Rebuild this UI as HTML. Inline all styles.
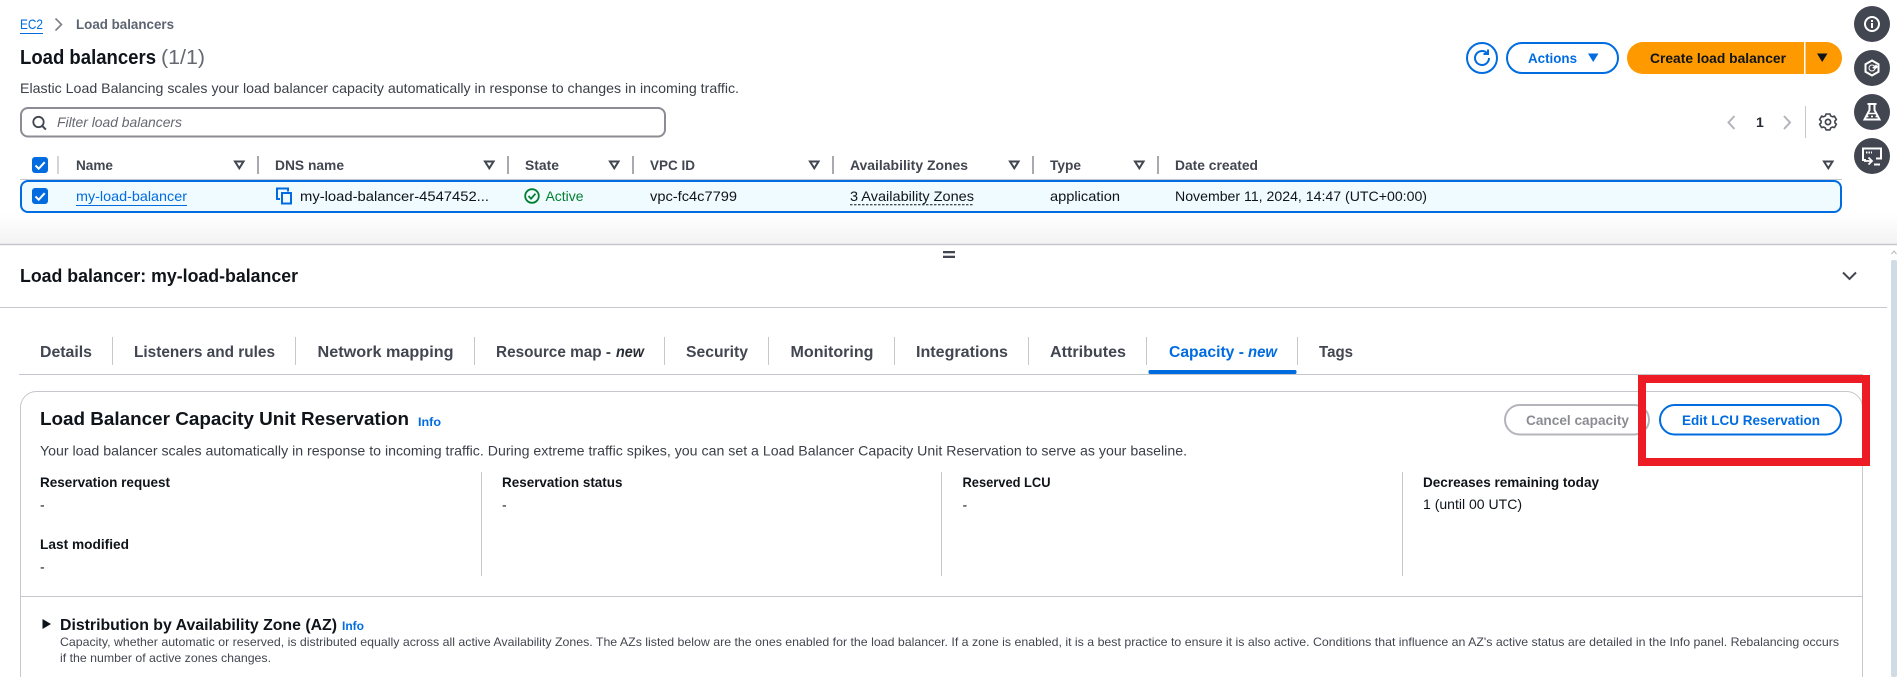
<!DOCTYPE html>
<html lang="en">
<head>
<meta charset="utf-8">
<title>Load balancers</title>
<style>
html,body{margin:0;padding:0;width:1897px;height:677px;overflow:hidden;background:#fff}
svg{display:block;position:absolute;left:0;top:0}
text{font-family:"Liberation Sans",Arial,sans-serif;font-size:14px;fill:#0f141a;white-space:pre}
.b{font-weight:700}
.h{font-weight:700;fill:#424650}
.l{fill:#006ce0}
.lb{fill:#006ce0;font-weight:700}
.d{fill:#3a3f48}
.t{font-weight:700;font-size:16px;fill:#424650}
.s{font-size:12px;fill:#424650}
.sep{stroke:#8c8c94;stroke-width:1.5}
.tsep{stroke:#c6c6cd;stroke-width:1}
.ft{fill:none;stroke:#424650;stroke-width:2;stroke-linejoin:miter}
</style>
</head>
<body>
<svg width="1897" height="677" viewBox="0 0 1897 677" xmlns="http://www.w3.org/2000/svg">
<defs>
<linearGradient id="g" x1="0" y1="0" x2="0" y2="1"><stop offset="0" stop-color="#ffffff"/><stop offset="1" stop-color="#f3f3f3"/></linearGradient>
</defs>

<!-- Breadcrumb -->
<text x="20" y="29" class="l" textLength="23" lengthAdjust="spacingAndGlyphs">EC2</text>
<line x1="20" y1="33.5" x2="43" y2="33.5" stroke="#006ce0" stroke-width="1"/>
<path d="M55.5 18.5L61.5 24.5L55.5 30.5" fill="none" stroke="#7d7f87" stroke-width="1.6"/>
<text x="76" y="29" class="b" style="fill:#5b6470" textLength="98" lengthAdjust="spacingAndGlyphs">Load balancers</text>

<!-- Heading -->
<text x="20" y="64" class="b" style="font-size:20px" textLength="136" lengthAdjust="spacingAndGlyphs">Load balancers</text>
<text x="161" y="64" style="font-size:20px;fill:#656871" textLength="44" lengthAdjust="spacingAndGlyphs">(1/1)</text>
<text x="20" y="93" class="d" textLength="719" lengthAdjust="spacingAndGlyphs">Elastic Load Balancing scales your load balancer capacity automatically in response to changes in incoming traffic.</text>

<!-- Top buttons -->
<circle cx="1482" cy="58" r="15" fill="#fff" stroke="#006ce0" stroke-width="2"/>
<path d="M1489 58a7 7 0 1 1-2.2-5.1" fill="none" stroke="#006ce0" stroke-width="2"/>
<path d="M1488 49.500v4.500h-4.500" fill="none" stroke="#006ce0" stroke-width="2"/>
<rect x="1507" y="43" width="111" height="30" rx="15" fill="#fff" stroke="#006ce0" stroke-width="2"/>
<text x="1528" y="63" class="lb" textLength="49" lengthAdjust="spacingAndGlyphs">Actions</text>
<path d="M1588 53.500h10.500L1593.200 62z" fill="#006ce0"/>
<path d="M1643 42H1804V74H1643A16 16 0 0 1 1643 42Z" fill="#ff9900"/>
<path d="M1805.500 42H1826A16 16 0 0 1 1826 74H1805.500Z" fill="#ff9900"/>
<text x="1650" y="63" class="b" textLength="136" lengthAdjust="spacingAndGlyphs">Create load balancer</text>
<path d="M1817 53.500h10.500L1822.200 62z" fill="#0f141a"/>

<!-- Side buttons -->
<circle cx="1872" cy="24" r="18" fill="#424650"/>
<circle cx="1872" cy="24" r="7" fill="none" stroke="#fff" stroke-width="2"/>
<rect x="1871" y="23" width="2" height="5" fill="#fff"/><rect x="1871" y="20" width="2" height="2" fill="#fff"/>
<circle cx="1872" cy="68" r="18" fill="#424650"/>
<path d="M1872 60.500l6.500 3.700v7.600l-6.500 3.700-6.500-3.700v-7.600z" fill="none" stroke="#fff" stroke-width="2"/>
<path d="M1872 68l4-3.500 2 2.500-2.500 2z" fill="#fff"/>
<circle cx="1872" cy="68" r="3" fill="none" stroke="#fff" stroke-width="1"/>
<circle cx="1872" cy="112" r="18" fill="#424650"/>
<path d="M1867.500 104h9M1869.500 104v6l-5 9.500h15l-5-9.500v-6" fill="none" stroke="#fff" stroke-width="2"/>
<path d="M1868.500 113.500h7M1867 116.500h1.500M1871 116.500h2M1875.500 116.500h1.500" stroke="#fff" stroke-width="1.500"/>
<circle cx="1872" cy="156" r="18" fill="#424650"/>
<path d="M1866 160h-3v-11.500h18v10h-5" fill="none" stroke="#fff" stroke-width="2"/>
<path d="M1866 152.500h6" stroke="#fff" stroke-width="2" stroke-dasharray="1.500 1"/>
<path d="M1868.500 157.500l3.500 3.500-3.500 3.500M1864 161h7.500" fill="none" stroke="#fff" stroke-width="1.800"/>
<path d="M1874 164.500h6" stroke="#fff" stroke-width="2"/>

<!-- Search -->
<rect x="21" y="108" width="644" height="28.500" rx="7" fill="#fff" stroke="#8c8c94" stroke-width="2"/>
<circle cx="38.500" cy="122" r="5.200" fill="none" stroke="#424650" stroke-width="1.800"/>
<path d="M42.300 126l3.600 3.600" stroke="#424650" stroke-width="2"/>
<text x="57" y="127" style="font-style:italic;fill:#656871" textLength="125" lengthAdjust="spacingAndGlyphs">Filter load balancers</text>

<!-- Pagination -->
<path d="M1734.500 116l-6 6.500 6 6.500" fill="none" stroke="#b4b4bb" stroke-width="2"/>
<text x="1756" y="127" class="b" style="fill:#272b33">1</text>
<path d="M1784 116l6 6.500-6 6.500" fill="none" stroke="#b4b4bb" stroke-width="2"/>
<line x1="1805.500" y1="106" x2="1805.500" y2="138" stroke="#c6c6cd" stroke-width="1"/>
<circle cx="1828" cy="122" r="2.600" fill="none" stroke="#424650" stroke-width="1.700"/>
<path d="M1826 115h4l.6 1.900 1.900.9 1.900-.7 2 3.400-1.500 1.400v2l1.500 1.300-2 3.400-1.900-.6-1.900 1-.6 1.900h-4l-.6-1.900-1.900-1-1.900.6-2-3.400 1.500-1.300v-2l-1.500-1.400 2-3.400 1.900.7 1.900-.9z" fill="none" stroke="#424650" stroke-width="1.600" stroke-linejoin="round" transform="translate(0 -1)"/>

<!-- Table header -->
<rect x="32" y="157" width="16" height="16" rx="3" fill="#006ce0"/>
<path d="M35.500 165.500l3.200 3.200 6-6.500" fill="none" stroke="#fff" stroke-width="2"/>
<line x1="58" y1="156" x2="58" y2="174" stroke="#c6c6cd" stroke-width="1.500"/>
<text x="76" y="170" class="h" textLength="37" lengthAdjust="spacingAndGlyphs">Name</text>
<path class="ft" d="M235 161.500h8.500l-4.200 6.800z"/>
<line class="sep" x1="258" y1="156" x2="258" y2="174"/>
<text x="275" y="170" class="h" textLength="69" lengthAdjust="spacingAndGlyphs">DNS name</text>
<path class="ft" d="M485 161.500h8.500l-4.200 6.800z"/>
<line class="sep" x1="508" y1="156" x2="508" y2="174"/>
<text x="525" y="170" class="h" textLength="34" lengthAdjust="spacingAndGlyphs">State</text>
<path class="ft" d="M610 161.500h8.500l-4.200 6.800z"/>
<line class="sep" x1="633" y1="156" x2="633" y2="174"/>
<text x="650" y="170" class="h" textLength="45" lengthAdjust="spacingAndGlyphs">VPC ID</text>
<path class="ft" d="M810 161.500h8.500l-4.200 6.800z"/>
<line class="sep" x1="833" y1="156" x2="833" y2="174"/>
<text x="850" y="170" class="h" textLength="118" lengthAdjust="spacingAndGlyphs">Availability Zones</text>
<path class="ft" d="M1010 161.500h8.500l-4.200 6.800z"/>
<line class="sep" x1="1033" y1="156" x2="1033" y2="174"/>
<text x="1050" y="170" class="h" textLength="31" lengthAdjust="spacingAndGlyphs">Type</text>
<path class="ft" d="M1135 161.500h8.500l-4.200 6.800z"/>
<line class="sep" x1="1158" y1="156" x2="1158" y2="174"/>
<text x="1175" y="170" class="h" textLength="83" lengthAdjust="spacingAndGlyphs">Date created</text>
<path class="ft" d="M1824 161.500h8.500l-4.200 6.800z"/>
<line x1="20" y1="179.500" x2="1842" y2="179.500" stroke="#c6c6cd" stroke-width="1"/>

<!-- Fade -->
<rect x="0" y="213" width="1897" height="31" fill="url(#g)"/>

<!-- Selected row -->
<rect x="21" y="181" width="1820" height="31" rx="7" fill="#f0fbff" stroke="#006ce0" stroke-width="2"/>
<rect x="32" y="188" width="16" height="16" rx="3" fill="#006ce0"/>
<path d="M35.500 196.500l3.200 3.200 6-6.500" fill="none" stroke="#fff" stroke-width="2"/>
<text x="76" y="201" class="l" textLength="111" lengthAdjust="spacingAndGlyphs">my-load-balancer</text>
<line x1="76" y1="205.500" x2="187" y2="205.500" stroke="#006ce0" stroke-width="1"/>
<path d="M280 199h-3v-10.500h11v3" fill="none" stroke="#006ce0" stroke-width="2"/>
<rect x="282" y="193" width="9" height="10.500" fill="none" stroke="#006ce0" stroke-width="2"/>
<text x="300" y="201" textLength="189" lengthAdjust="spacingAndGlyphs">my-load-balancer-4547452...</text>
<circle cx="532" cy="196" r="6.800" fill="none" stroke="#00802f" stroke-width="1.800"/>
<path d="M528.500 196l2.500 2.700 4.500-5" fill="none" stroke="#00802f" stroke-width="1.800"/>
<text x="545.500" y="201" style="fill:#00802f" textLength="38" lengthAdjust="spacingAndGlyphs">Active</text>
<text x="650" y="201" textLength="87" lengthAdjust="spacingAndGlyphs">vpc-fc4c7799</text>
<text x="850" y="201" textLength="124" lengthAdjust="spacingAndGlyphs">3 Availability Zones</text>
<line x1="850" y1="204.700" x2="974" y2="204.700" stroke="#0f141a" stroke-width="1" stroke-dasharray="2.500 1.500"/>
<text x="1050" y="201" textLength="70" lengthAdjust="spacingAndGlyphs">application</text>
<text x="1175" y="201" textLength="252" lengthAdjust="spacingAndGlyphs">November 11, 2024, 14:47 (UTC+00:00)</text>

<!-- Split panel -->
<line x1="0" y1="244.500" x2="1897" y2="244.500" stroke="#c6c6cd" stroke-width="1.500"/>
<rect x="943" y="251" width="12" height="2.300" fill="#424650"/>
<rect x="943" y="255.700" width="12" height="2.300" fill="#424650"/>
<text x="20" y="282" class="b" style="font-size:18px" textLength="278" lengthAdjust="spacingAndGlyphs">Load balancer: my-load-balancer</text>
<path d="M1843 272.500l6.500 6.500 6.500-6.500" fill="none" stroke="#424650" stroke-width="2"/>
<line x1="0" y1="307.500" x2="1887" y2="307.500" stroke="#c6c6cd" stroke-width="1"/>

<!-- Scrollbar -->
<path d="M1891.500 254l2.500-3 2.500 3" fill="none" stroke="#b8b8b8" stroke-width="1"/>
<rect x="1891" y="260" width="6" height="417" rx="2" fill="#d0dbe4"/>

<!-- Tabs -->
<text x="40" y="357" class="t" textLength="52" lengthAdjust="spacingAndGlyphs">Details</text>
<line class="tsep" x1="112.500" y1="337" x2="112.500" y2="365"/>
<text x="134" y="357" class="t" textLength="141" lengthAdjust="spacingAndGlyphs">Listeners and rules</text>
<line class="tsep" x1="295.500" y1="337" x2="295.500" y2="365"/>
<text x="317.500" y="357" class="t" textLength="136" lengthAdjust="spacingAndGlyphs">Network mapping</text>
<line class="tsep" x1="474.500" y1="337" x2="474.500" y2="365"/>
<text x="496" y="357" class="t" textLength="115" lengthAdjust="spacingAndGlyphs">Resource map -</text>
<text x="616" y="357" class="t" style="font-style:italic;fill:#272b33" textLength="28" lengthAdjust="spacingAndGlyphs">new</text>
<line class="tsep" x1="664.500" y1="337" x2="664.500" y2="365"/>
<text x="686" y="357" class="t" textLength="62" lengthAdjust="spacingAndGlyphs">Security</text>
<line class="tsep" x1="768.500" y1="337" x2="768.500" y2="365"/>
<text x="790.500" y="357" class="t" textLength="83" lengthAdjust="spacingAndGlyphs">Monitoring</text>
<line class="tsep" x1="894.500" y1="337" x2="894.500" y2="365"/>
<text x="916" y="357" class="t" textLength="92" lengthAdjust="spacingAndGlyphs">Integrations</text>
<line class="tsep" x1="1028.500" y1="337" x2="1028.500" y2="365"/>
<text x="1050" y="357" class="t" textLength="76" lengthAdjust="spacingAndGlyphs">Attributes</text>
<line class="tsep" x1="1146.500" y1="337" x2="1146.500" y2="365"/>
<text x="1169" y="357" class="t" style="fill:#006ce0" textLength="75" lengthAdjust="spacingAndGlyphs">Capacity -</text>
<text x="1248" y="357" class="t" style="font-style:italic;fill:#006ce0" textLength="29" lengthAdjust="spacingAndGlyphs">new</text>
<line class="tsep" x1="1297.500" y1="337" x2="1297.500" y2="365"/>
<text x="1319" y="357" class="t" textLength="34" lengthAdjust="spacingAndGlyphs">Tags</text>
<line x1="19" y1="374.500" x2="1863" y2="374.500" stroke="#c6c6cd" stroke-width="1"/>
<rect x="1148.500" y="370" width="148" height="4" rx="1.500" fill="#006ce0"/>

<!-- Card -->
<path d="M20.500 677V407.500a16 16 0 0 1 16-16H1846.500a16 16 0 0 1 16 16V677" fill="#fff" stroke="#c6c6cd" stroke-width="1"/>
<text x="40" y="425" class="b" style="font-size:18px" textLength="369" lengthAdjust="spacingAndGlyphs">Load Balancer Capacity Unit Reservation</text>
<text x="418" y="426" class="lb" style="font-size:12px" textLength="23" lengthAdjust="spacingAndGlyphs">Info</text>
<text x="40" y="455.500" class="d" textLength="1147" lengthAdjust="spacingAndGlyphs">Your load balancer scales automatically in response to incoming traffic. During extreme traffic spikes, you can set a Load Balancer Capacity Unit Reservation to serve as your baseline.</text>

<rect x="1505" y="405" width="144" height="29.500" rx="14.700" fill="#fff" stroke="#b4b4bb" stroke-width="2"/>
<text x="1526" y="425" class="b" style="fill:#8c8c94" textLength="103" lengthAdjust="spacingAndGlyphs">Cancel capacity</text>
<rect x="1660" y="405" width="181" height="29.500" rx="14.700" fill="#fff" stroke="#006ce0" stroke-width="2"/>
<text x="1682" y="425" class="lb" textLength="138" lengthAdjust="spacingAndGlyphs">Edit LCU Reservation</text>

<!-- Red annotation -->
<rect x="1642" y="379" width="224" height="83" fill="none" stroke="#ed1c24" stroke-width="8"/>

<!-- Columns -->
<line x1="481.500" y1="472" x2="481.500" y2="576" stroke="#c6c6cd" stroke-width="1"/>
<line x1="941.500" y1="472" x2="941.500" y2="576" stroke="#c6c6cd" stroke-width="1"/>
<line x1="1402.500" y1="472" x2="1402.500" y2="576" stroke="#c6c6cd" stroke-width="1"/>
<text x="40" y="487" class="b" textLength="130" lengthAdjust="spacingAndGlyphs">Reservation request</text>
<text x="40" y="509.500">-</text>
<text x="40" y="549" class="b" textLength="89" lengthAdjust="spacingAndGlyphs">Last modified</text>
<text x="40" y="571.500">-</text>
<text x="502" y="487" class="b" textLength="120.500" lengthAdjust="spacingAndGlyphs">Reservation status</text>
<text x="502" y="509.500">-</text>
<text x="962.500" y="487" class="b" textLength="88" lengthAdjust="spacingAndGlyphs">Reserved LCU</text>
<text x="962.500" y="509.500">-</text>
<text x="1423" y="487" class="b" textLength="176" lengthAdjust="spacingAndGlyphs">Decreases remaining today</text>
<text x="1423" y="509" textLength="99" lengthAdjust="spacingAndGlyphs">1 (until 00 UTC)</text>

<line x1="20" y1="596.500" x2="1862" y2="596.500" stroke="#c6c6cd" stroke-width="1"/>

<!-- Distribution -->
<path d="M42.500 619l8.500 5-8.500 5z" fill="#0f141a"/>
<text x="60" y="630" class="b" style="font-size:16px" textLength="277" lengthAdjust="spacingAndGlyphs">Distribution by Availability Zone (AZ)</text>
<text x="342" y="630" class="lb" style="font-size:12px" textLength="22" lengthAdjust="spacingAndGlyphs">Info</text>
<text x="60" y="646" class="s" textLength="1779" lengthAdjust="spacingAndGlyphs">Capacity, whether automatic or reserved, is distributed equally across all active Availability Zones. The AZs listed below are the ones enabled for the load balancer. If a zone is enabled, it is a best practice to ensure it is also active. Conditions that influence an AZ's active status are detailed in the Info panel. Rebalancing occurs</text>
<text x="60" y="662" class="s" textLength="211" lengthAdjust="spacingAndGlyphs">if the number of active zones changes.</text>
</svg>
</body>
</html>
